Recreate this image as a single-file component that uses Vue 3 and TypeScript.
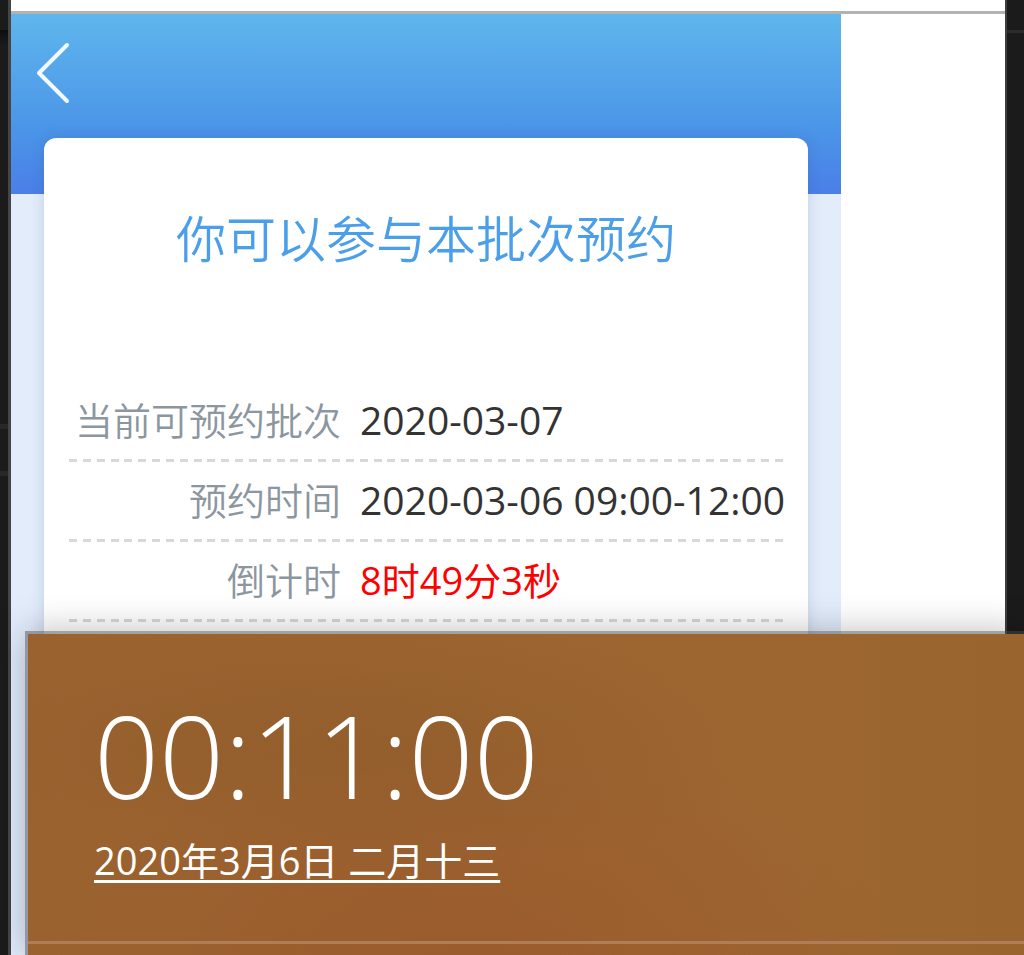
<script setup lang="ts">
interface Detail {
  label: string
  value: string
  urgent?: boolean
}

const details: Detail[] = [
  { label: '当前可预约批次', value: '2020-03-07' },
  { label: '预约时间', value: '2020-03-06 09:00-12:00' },
  { label: '倒计时', value: '8时49分3秒', urgent: true },
]
</script>

<template>
  <div class="desktop">
    <main class="browser">
      <div class="toolbar"></div>
      <div class="viewport">
        <div class="booking">
          <header class="hero">
            <button class="back" type="button" aria-label="返回">
              <svg width="36" height="62" viewBox="0 0 36 62" aria-hidden="true">
                <path d="M32 3 L4 31 L32 59" />
              </svg>
            </button>
          </header>
          <section class="card">
            <h1>你可以参与本批次预约</h1>
            <dl>
              <div v-for="item in details" :key="item.label" class="row">
                <dt>{{ item.label }}</dt>
                <dd :class="{ urgent: item.urgent }">{{ item.value }}</dd>
              </div>
            </dl>
          </section>
        </div>
      </div>
    </main>
    <aside class="clock">
      <div class="now">
        <time class="time">00:11:00</time>
        <a class="date" href="#">2020年3月6日 二月十三</a>
      </div>
    </aside>
  </div>
</template>

<style>
body {
  margin: 0;
}
</style>

<style scoped>
.desktop {
  position: relative;
  display: flex;
  box-sizing: border-box;
  min-height: 100vh;
  padding: 0 17px 0 8px;
  overflow: hidden;
  font-family: "Open Sans", "Noto Sans CJK SC", sans-serif;
  background:
    linear-gradient(#2b2b2b, #2b2b2b) 100% 30px / 19px 3px no-repeat,
    linear-gradient(#0e0e0e, #1b1b1b) 0 30px / 8px 16px no-repeat,
    linear-gradient(#282828, #282828) 0 424px / 11px 5px no-repeat,
    linear-gradient(#282828, #282828) 0 471px / 11px 5px no-repeat,
    #1b1b1b;
}
.browser {
  display: flex;
  flex: 1;
  flex-direction: column;
  min-width: 0;
  background: #fff;
  border-left: 3px solid #454545;
  border-right: 2px solid #3c3e40;
}
.toolbar {
  height: 11px;
  border-bottom: 3px solid #b3b3b3;
}
.viewport {
  display: flex;
  flex: 1;
}
.booking {
  display: flex;
  flex-direction: column;
  flex: 0 1 830px;
  min-width: 0;
  background: #e2ecfb;
}
.hero {
  height: 180px;
  flex: none;
  background: linear-gradient(#5fb6ec, #4b95e8 64%, #4a7fe7);
}
.back {
  display: block;
  margin: 28px 0 0 24px;
  padding: 0;
  border: 0;
  background: none;
  cursor: pointer;
}
.back svg {
  display: block;
}
.back path {
  fill: none;
  stroke: #f3f9ff;
  stroke-width: 4;
  stroke-linecap: round;
  stroke-linejoin: round;
}
.card {
  flex: 1;
  margin: -56px 33px 0;
  padding: 65px 25px 0;
  border-radius: 12px;
  background: #fff;
  box-shadow: 0 0 14px rgba(40, 70, 120, 0.16);
}
h1 {
  margin: 0 0 107px;
  font-size: 50px;
  font-weight: 350;
  line-height: 72px;
  text-align: center;
  white-space: nowrap;
  color: #4a9fe8;
}
dl {
  margin: 0;
}
.row {
  --period: calc((100% - 8px) / 51);
  display: flex;
  gap: 19px;
  height: 80px;
  line-height: 76px;
  white-space: nowrap;
  background: repeating-linear-gradient(90deg, #d8d8d8 0 8px, transparent 8px var(--period)) bottom / 100% 3px no-repeat;
}
dt {
  flex: 0 0 272px;
  display: flex;
  justify-content: flex-end;
  font-size: 38px;
  font-weight: 350;
  color: #8b969f;
}
dd {
  margin: 0;
  font-size: 39px;
  color: #333;
}
dd.urgent {
  font-size: 38px;
  color: #f00;
}
.clock {
  position: absolute;
  top: 631px;
  right: 0;
  bottom: 0;
  left: 25px;
  border: solid rgba(70, 70, 72, 0.5);
  border-width: 3px 0 0 3px;
  box-shadow: 0 0 34px rgba(0, 0, 0, 0.26);
  color: #fff;
  background:
    radial-gradient(ellipse at 32% 35%, rgba(142, 91, 42, 0.6), transparent 45%),
    radial-gradient(ellipse at 45% 110%, rgba(154, 88, 43, 0.8), transparent 55%),
    linear-gradient(90deg, #9a622f, #9d6631 75%, #99642d);
  background-clip: padding-box;
}
.now {
  display: flex;
  flex-direction: column;
  align-items: flex-start;
  box-sizing: border-box;
  height: 310px;
  padding: 56px 66px 0;
  border-bottom: 3px solid #b07d56;
}
.time {
  font-size: 114px;
  font-weight: 300;
  line-height: 130px;
}
.date {
  margin-top: 12px;
  font-size: 38px;
  line-height: 56px;
  white-space: nowrap;
  color: #fff;
  text-decoration: underline 3px;
  text-underline-offset: 5px;
  text-decoration-skip-ink: none;
}
</style>
